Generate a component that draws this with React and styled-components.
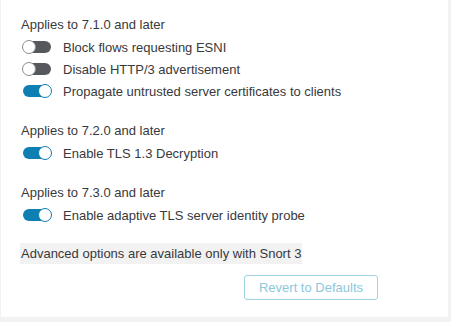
import styled, { createGlobalStyle } from "styled-components";

const GlobalStyle = createGlobalStyle`
  html, body {
    margin: 0;
    padding: 0;
    background: #f2f2f2;
  }
  body {
    font-family: "Liberation Sans", Arial, sans-serif;
    color: #39393b;
  }
`

const Panel = styled.div`
  margin-left: 1px;
  width: 447px;
  height: 317px;
  background: #ffffff;
  box-sizing: border-box;
  padding: 17px 0 0 19px;
  display: flex;
  flex-direction: column;
`

const Section = styled.div`
  display: flex;
  flex-direction: column;

  & + & {
    margin-top: 21px;
  }
`

const Heading = styled.div`
  font-size: 13px;
  line-height: 16px;
  padding-left: 1px;
  margin-bottom: 3px;
`

const Row = styled.label`
  display: flex;
  align-items: center;
  height: 22px;
  font-size: 13px;
  padding-left: 3px;
`

const Track = styled.span`
  position: relative;
  width: 28px;
  height: 12px;
  border-radius: 7px;
  background: ${(props) => (props.on ? "#0d7fb3" : "#55585d")};
  margin-right: 12px;
  flex-shrink: 0;
`

const Knob = styled.span`
  position: absolute;
  top: -1px;
  ${(props) => (props.on ? "right: -1px;" : "left: -1px;")}
  width: 12px;
  height: 12px;
  border-radius: 50%;
  background: #ffffff;
  border: 1px solid ${(props) => (props.on ? "#0d7fb3" : "#8a8d91")};
`

const Notice = styled.div`
  align-self: flex-start;
  background: #f2f2f2;
  font-size: 13px;
  line-height: 21px;
  padding: 0 1px;
  margin-top: 17px;
`

const Footer = styled.div`
  display: flex;
  justify-content: flex-end;
  padding-right: 70px;
  margin-top: 11px;
`

const Button = styled.button`
  width: 134px;
  height: 25px;
  border: 1px solid #9fd3e3;
  border-radius: 3px;
  background: #ffffff;
  color: #8cc7dc;
  font-family: "Liberation Sans", Arial, sans-serif;
  font-size: 13px;
  padding: 0;
`

const Toggle = ({ on, children }) => (
  <Row>
    <Track on={on}>
      <Knob on={on} />
    </Track>
    {children}
  </Row>
)

const sections = [
  {
    title: "Applies to 7.1.0 and later",
    items: [
      { label: "Block flows requesting ESNI", on: false },
      { label: "Disable HTTP/3 advertisement", on: false },
      { label: "Propagate untrusted server certificates to clients", on: true },
    ],
  },
  {
    title: "Applies to 7.2.0 and later",
    items: [{ label: "Enable TLS 1.3 Decryption", on: true }],
  },
  {
    title: "Applies to 7.3.0 and later",
    items: [{ label: "Enable adaptive TLS server identity probe", on: true }],
  },
]

const App = () => {
  return (
    <>
      <GlobalStyle />
      <Panel>
        {sections.map((s) => (
          <Section key={s.title}>
            <Heading>{s.title}</Heading>
            {s.items.map((item) => (
              <Toggle key={item.label} on={item.on}>
                {item.label}
              </Toggle>
            ))}
          </Section>
        ))}
        <Notice>Advanced options are available only with Snort 3</Notice>
        <Footer>
          <Button disabled>Revert to Defaults</Button>
        </Footer>
      </Panel>
    </>
  );
}

export default App;
